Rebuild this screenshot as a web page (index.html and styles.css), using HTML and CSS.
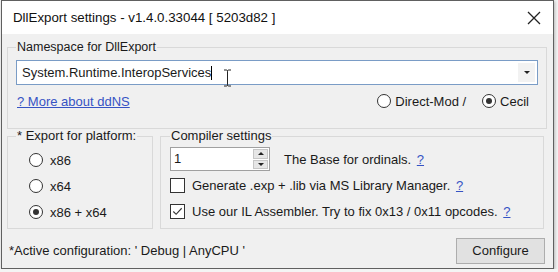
FILE: index.html
```html
<!DOCTYPE html>
<html lang="en">
<head>
  <meta charset="UTF-8">
  <title>DllExport settings</title>
  <link rel="stylesheet" href="styles.css">
</head>
<body>

  <div class="window">
    <div class="titlebar">
      <span class="title">DllExport settings - v1.4.0.33044 [ 5203d82 ]</span>
      <svg class="close" width="14" height="14" viewBox="0 0 14 14">
        <path d="M1 1 L13 13 M13 1 L1 13" stroke="#222" stroke-width="1.3" fill="none"/>
      </svg>
    </div>

    <div class="content">
      <fieldset class="group ns">
        <legend>Namespace for DllExport</legend>
        <div class="combo">
          <span class="combo-text">System.Runtime.InteropServices<span class="caret"></span></span>
          <span class="combo-btn"><span class="tri-down"></span></span>
          <svg class="ibeam" width="9" height="18" viewBox="0 0 9 18">
            <path d="M1 1 H3.5 Q4.5 1 4.5 2.5 V15.5 Q4.5 17 3.5 17 H1 M8 1 H5.5 Q4.5 1 4.5 2.5 M4.5 15.5 Q4.5 17 5.5 17 H8" stroke="#222" stroke-width="1" fill="none"/>
          </svg>
        </div>
        <div class="ns-row">
          <a class="link" href="#">? More about ddNS</a>
          <div class="ns-radios">
            <span class="radio"></span><span class="opt">Direct-Mod /</span>
            <span class="radio checked"></span><span class="opt">Cecil</span>
          </div>
        </div>
      </fieldset>

      <div class="groups">
        <fieldset class="group platform">
          <legend>* Export for platform:</legend>
          <div class="opt-row"><span class="radio"></span>x86</div>
          <div class="opt-row"><span class="radio"></span>x64</div>
          <div class="opt-row"><span class="radio checked"></span>x86 + x64</div>
        </fieldset>

        <fieldset class="group compiler">
          <legend>Compiler settings</legend>
          <div class="comp-row">
            <div class="spinner">
              <span class="spin-val">1</span>
              <span class="spin-btns">
                <span class="spin-btn"><span class="tri-up"></span></span>
                <span class="spin-btn"><span class="tri-down"></span></span>
              </span>
            </div>
            <span>The Base for ordinals. <a class="q" href="#">?</a></span>
          </div>
          <div class="comp-row">
            <span class="check"></span>
            <span>Generate .exp + .lib via MS Library Manager. <a class="q" href="#">?</a></span>
          </div>
          <div class="comp-row">
            <span class="check">
              <svg width="14" height="14" viewBox="0 0 14 14"><path d="M2.5 7 L5.5 10 L11.5 3.5" stroke="#333" stroke-width="1.2" fill="none"/></svg>
            </span>
            <span>Use our IL Assembler. Try to fix 0x13 / 0x11 opcodes. <a class="q" href="#">?</a></span>
          </div>
        </fieldset>
      </div>

      <div class="footer">
        <span class="status">*Active configuration: ' Debug | AnyCPU '</span>
        <button class="btn">Configure</button>
      </div>
    </div>
  </div>

</body>
</html>
```

FILE: styles.css
```css
body {
  margin: 0;
  background: #f4f4f4;
  font-family: "Liberation Sans", Arial, sans-serif;
  font-size: 13px;
  color: #1a1a1a;
}
.window {
  width: 551px;
  height: 267px;
  margin-left: 1px;
  border: 1px solid #606060;
  background: #f0f0f0;
  box-shadow: 1px 1px 3px rgba(0,0,0,0.25);
  display: flex;
  flex-direction: column;
}
.titlebar {
  height: 33px;
  background: #fff;
  display: flex;
  align-items: center;
  justify-content: space-between;
  padding: 0 12px 0 11px;
  flex-shrink: 0;
}
.title {
  font-size: 13.3px;
  color: #111;
}
.content {
  flex: 1;
  padding: 6px 6px 0 5px;
  display: flex;
  flex-direction: column;
}
.group {
  margin: 0;
  border: 1px solid #d9d9d9;
  min-width: 0;
}
.group legend {
  padding: 0 1px;
  margin: 0;
  line-height: 14px;
}
.ns {
  padding: 6px 8px 19px 8px;
}
.ns legend {
  font-size: 12.5px;
}
.combo {
  position: relative;
  height: 23px;
  border: 1px solid #7a9cc6;
  background: #fff;
  display: flex;
  align-items: center;
}
.combo-text {
  flex: 1;
  padding-left: 5px;
}
.caret {
  display: inline-block;
  width: 1px;
  height: 14px;
  background: #000;
  vertical-align: -3px;
}
.combo-btn {
  width: 17px;
  height: 19px;
  margin-right: 2px;
  background: #f2f2f2;
  display: flex;
  align-items: center;
  justify-content: center;
}
.tri-down {
  width: 0;
  height: 0;
  border-left: 3px solid transparent;
  border-right: 3px solid transparent;
  border-top: 3px solid #222;
}
.tri-up {
  width: 0;
  height: 0;
  border-left: 3px solid transparent;
  border-right: 3px solid transparent;
  border-bottom: 3px solid #222;
}
.ibeam {
  position: absolute;
  left: 206px;
  top: 8px;
}
.ns-row {
  margin-top: 8px;
  display: flex;
  justify-content: space-between;
  align-items: center;
  height: 16px;
}
.link {
  color: #3653c4;
  text-decoration: underline;
  margin-left: 1px;
}
.ns-radios {
  display: flex;
  align-items: center;
  margin-right: 9px;
}
.ns-radios .opt {
  margin-left: 4px;
  margin-right: 16px;
}
.ns-radios .opt:last-child {
  margin-right: 0;
}
.radio {
  display: inline-block;
  width: 12px;
  height: 12px;
  border: 1px solid #333;
  border-radius: 50%;
  background: #fff;
  position: relative;
}
.radio.checked::after {
  content: "";
  position: absolute;
  left: 3px;
  top: 3px;
  width: 6px;
  height: 6px;
  border-radius: 50%;
  background: #333;
}
.groups {
  display: flex;
  gap: 7px;
  margin-right: 3px;
}
.platform {
  width: 146px;
  box-sizing: border-box;
  padding: 4px 8px 3px 8px;
}
.opt-row {
  height: 26px;
  display: flex;
  align-items: center;
}
.opt-row .radio {
  margin-left: 13px;
  margin-right: 7px;
}
.compiler {
  flex: 1;
  padding: 3px 9px 4px 9px;
}
.comp-row {
  height: 26px;
  display: flex;
  align-items: center;
}
.spinner {
  width: 98px;
  height: 22px;
  border: 1px solid #a0a0a0;
  background: #fff;
  display: flex;
  margin-right: 14px;
}
.spin-val {
  flex: 1;
  padding: 3px 0 0 3px;
}
.spin-btns {
  width: 15px;
  display: flex;
  flex-direction: column;
  gap: 1px;
  padding: 1px;
}
.spin-btn {
  flex: 1;
  background: #e6e6e6;
  border: 1px solid #c6c6c6;
  display: flex;
  align-items: center;
  justify-content: center;
}
.check {
  width: 13px;
  height: 13px;
  border: 1px solid #333;
  background: #fff;
  margin-right: 7px;
}
.check svg {
  display: block;
  width: 13px;
  height: 13px;
}
.q {
  color: #3653c4;
  text-decoration: underline;
  margin-left: 2px;
}
.footer {
  flex: 1;
  display: flex;
  align-items: center;
  justify-content: space-between;
  padding: 4px 2px 0 2px;
}
.btn {
  width: 89px;
  height: 26px;
  background: #e1e1e1;
  border: 1px solid #adadad;
  font-family: "Liberation Sans", Arial, sans-serif;
  font-size: 13px;
  color: #1a1a1a;
  padding: 0;
}
```
